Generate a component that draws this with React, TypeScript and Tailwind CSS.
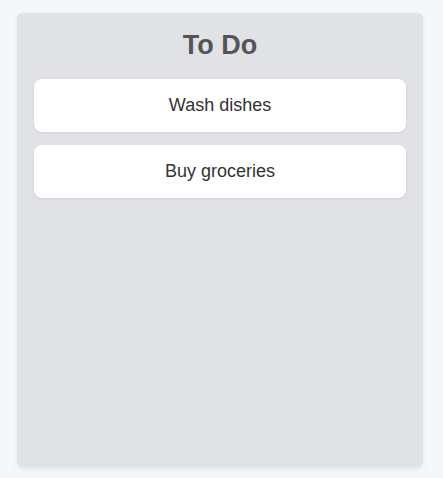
export default function App() {
  return (
    <div className="min-h-[478px] w-full bg-[#f6f7fb] pt-[13px] pl-[17px]" style={{ fontFamily: '"Liberation Sans", Arial, sans-serif' }}>
      <div className="w-[406px] h-[454px] rounded-[6px] bg-[#e1e2e6] shadow-[0_2px_6px_rgba(0,0,0,0.08)] px-[17px] pt-[16px] flex flex-col">
        <h2 className="text-center text-[27px] leading-[32px] font-bold text-[#555558]">To Do</h2>
        <div className="mt-[18px] flex flex-col gap-[13px]">
          {["Wash dishes", "Buy groceries"].map((t) => (
            <div key={t} className="h-[53px] rounded-[8px] bg-white shadow-[0_1px_3px_rgba(0,0,0,0.08)] flex items-center justify-center text-[18px] text-[#333333]">
              {t}
            </div>
          ))}
        </div>
      </div>
    </div>
  );
}
